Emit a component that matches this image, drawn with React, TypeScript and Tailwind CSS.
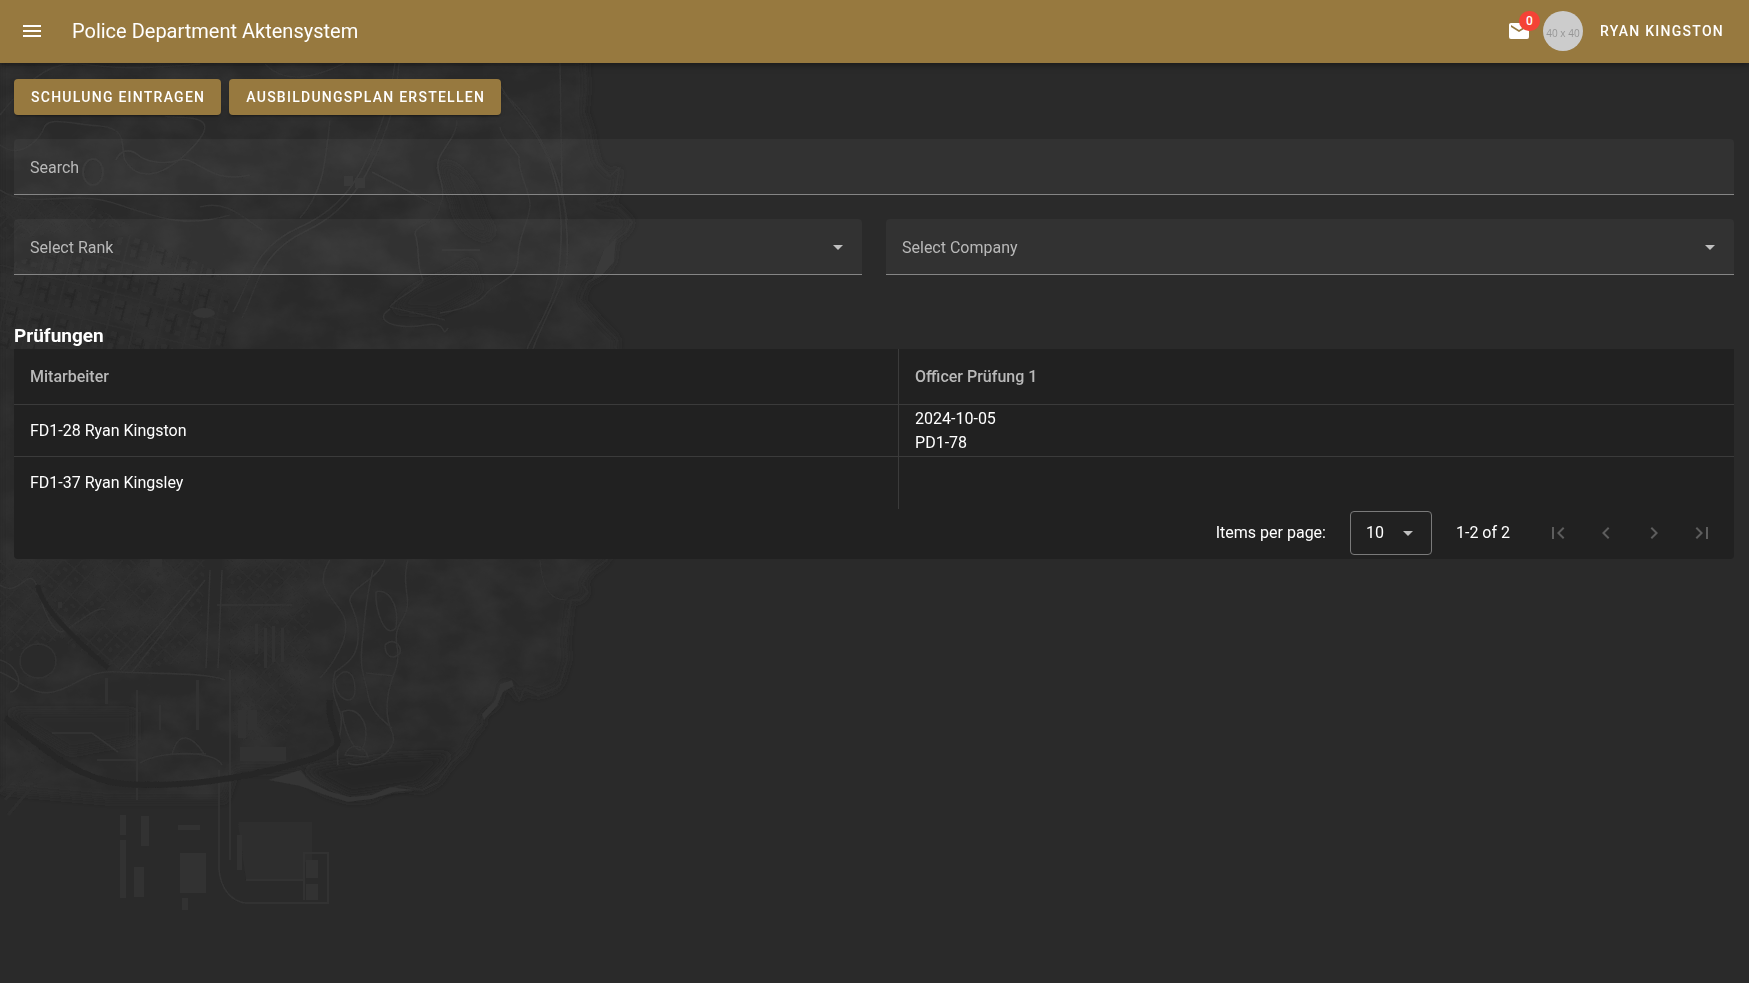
import type { ReactNode } from "react";

const ICONS = {
  menu: "M3 6h18v2H3zm0 5h18v2H3zm0 5h18v2H3z",
  mail: "M20 8l-8 5-8-5V6l8 5 8-5m0-2H4c-1.11 0-2 .89-2 2v12a2 2 0 0 0 2 2h16a2 2 0 0 0 2-2V6a2 2 0 0 0-2-2z",
  down: "M7 10l5 5 5-5z",
  first: "M18.41 16.59L13.82 12l4.59-4.59L17 6l-6 6 6 6zM6 6h2v12H6z",
  prev: "M15.41 16.58L10.83 12l4.58-4.59L14 6l-6 6 6 6z",
  next: "M8.59 16.58L13.17 12 8.59 7.41 10 6l6 6-6 6z",
  last: "M5.59 7.41L10.18 12l-4.59 4.59L7 18l6-6-6-6zM16 6h2v12h-2z",
};

function Icon({ name, className = "" }: { name: keyof typeof ICONS; className?: string }) {
  return (
    <svg viewBox="0 0 24 24" aria-hidden="true" className={`size-6 fill-current ${className}`}>
      <path d={ICONS[name]} />
    </svg>
  );
}

const BUTTON =
  "h-9 cursor-pointer rounded bg-[#97793f] pr-4 pl-[17px] text-sm font-medium uppercase tracking-[0.09em] shadow-[0_3px_1px_-2px_rgba(0,0,0,0.2),0_2px_2px_rgba(0,0,0,0.14),0_1px_5px_rgba(0,0,0,0.12)]";

const FIELD =
  "peer block h-14 w-full appearance-none rounded-t border-b border-[#858585] bg-white/4 px-4 text-base text-white outline-none";

const FIELD_LABEL = "pointer-events-none absolute top-[17px] left-4 leading-6 text-[#b9b9b9]";

function SelectField({ id, label }: { id: string; label: string }) {
  return (
    <div className="relative">
      <select id={id} className={FIELD} defaultValue="">
        <option value="" />
      </select>
      <label htmlFor={id} className={FIELD_LABEL}>{label}</label>
      <Icon name="down" className="pointer-events-none absolute right-3 top-4 text-[#c0c0c0]" />
    </div>
  );
}

const COAST =
  "M585 60L586 90 584 112 590 130 592 143 597 163 610 176 619 168 616 190 613 200 594 204 618 208 632 222 626 232 615 240 612 263 600 276 588 282 580 300 596 318 617 340 612 380 620 460 610 530 607 560 590 572 582 584 588 592 580 600 571 600 569 613 566 640 567 660 560 684 556 688 538 695 524 689 520 700 510 683 503 682 497 705 483 714 482 724 470 738 466 750 451 763 438 782 422 790 400 786 384 790 372 798 350 800 330 794 318 788 306 778 300 770";

const LAND = `M0 60${COAST.replace("M", "L")}L235 770 225 800 110 800 0 790Z`;

const ROADS = [
  "M503 93C530 115 545 145 556 175S568 240 567 262 545 315 533 349",
  "M500 85C520 120 540 130 552 170S562 240 559 270 535 330 527 349",
  "M560 62L562 190 567 220",
  "M500 127C502 140 515 148 519 157 518 175 530 190 530 205S518 235 518 258 495 282 487 293 460 310 440 313",
  "M457 120C457 138 440 150 438 162S448 190 440 205C436 228 416 222 415 234 421 250 415 262 423 280 415 292 398 296 390 307",
  "M395 63C390 100 385 115 375 140S350 205 300 227 250 285 233 312",
  "M399 63C396 100 392 115 382 140S355 208 306 231 258 288 242 318",
  "M330 120C325 160 325 190 300 218",
  "M372 172L435 205M442 250H480",
  "M0 115C20 90 45 60 80 64S130 70 200 64",
  "M0 145C20 160 40 140 44 128S70 124 100 126 120 150 125 160 150 190 190 150 178 120 165 116",
  "M116 160C120 150 130 148 138 155S165 165 180 160 210 185 250 175",
  "M265 64C290 90 330 70 345 63",
  "M0 190C30 210 70 190 110 202S180 230 230 215",
  "M200 207C225 200 240 215 262 230",
  "M390 309C370 322 400 330 425 325S440 340 448 328",
  "M385 560C378 580 348 588 350 602 355 615 359 622 358 640S345 665 335 672C330 690 335 700 340 712S335 745 338 765",
  "M408 560C400 590 415 600 402 620S403 650 396 668 382 710 392 732 360 770 348 763",
  "M373 570C365 600 365 620 362 645S366 680 368 695 382 720 392 728",
  "M376 592C385 588 400 600 396 628 385 640 375 610 376 592Z",
  "M335 680C345 665 355 672 355 690S335 700 335 680Z",
  "M342 712C355 705 370 720 365 742S345 735 342 712Z",
  "M345 755C350 742 365 745 368 757ZM366 673L394 676",
  "M385 645C395 635 405 650 398 655S385 655 385 645Z",
  "M330 560C310 590 340 600 345 620S330 668 320 678",
  "M0 585C20 600 30 560 38 590S55 630 60 632 100 602 105 610",
  "M0 672C20 680 35 700 60 690S90 670 120 672 205 672 225 680",
  "M0 660C20 665 25 690 10 692",
  "M120 670L190 590M132 672L205 580",
  "M210 570L206 668M222 570L218 668M217 605H292",
  "M52 733H92L118 752M97 760H137M137 690V800M160 705V730",
  "M140 763C160 750 215 750 222 765M230 670V860M219 770V870C221 890 232 901 245 903",
  "M172 755C178 730 192 735 204 754M172 754H206",
];

const HIGHWAY = "M5 718C40 745 75 780 125 784S240 780 302 762 325 740 330 700";

const BLOCKS: [number, number, number, number][] = [
  [120, 815, 6, 20], [120, 840, 6, 58], [134, 867, 10, 30], [141, 816, 8, 30],
  [180, 853, 26, 40], [182, 898, 6, 12], [178, 825, 22, 5],
  [306, 860, 12, 18], [306, 884, 12, 16], [237, 835, 5, 35], [238, 710, 8, 28],
  [248, 710, 9, 20], [240, 747, 46, 14], [196, 680, 3, 50], [58, 602, 4, 6], [105, 678, 3, 26],
  [344, 176, 9, 10], [355, 178, 10, 10], [150, 558, 12, 9],
  [255, 624, 3, 30], [264, 628, 3, 40], [272, 626, 3, 36], [281, 628, 3, 34],
];

const BEACH = "M268 780L300 770 310 782 328 791 350 797 372 795 390 787 415 790 395 792 372 799 348 802 322 794 300 786Z";

/** Faint aerial map behind the page content. */
function MapBackdrop() {
  return (
    <svg
      aria-hidden="true"
      viewBox="0 0 1749 983"
      preserveAspectRatio="xMinYMin slice"
      className="pointer-events-none absolute inset-0 -z-10 size-full"
    >
      <defs>
        <filter id="terrain" x="0" y="0" width="100%" height="100%" colorInterpolationFilters="sRGB">
          <feGaussianBlur in="SourceAlpha" stdDeviation="4" result="shape" />
          <feTurbulence type="fractalNoise" baseFrequency="0.022 0.03" numOctaves="6" seed="8" />
          <feColorMatrix values="0 0 0 0 0.27  0 0 0 0 0.27  0 0 0 0 0.27  1.8 0 0 0 -0.6" />
          <feComposite in2="shape" operator="in" />
        </filter>
        <filter id="soft">
          <feGaussianBlur stdDeviation="0.7" />
        </filter>
        <filter id="haze">
          <feGaussianBlur stdDeviation="4" />
        </filter>
        <pattern id="streets" width="26" height="32" patternUnits="userSpaceOnUse" patternTransform="rotate(14)">
          <path d="M0 1H26M1 0V32" stroke="#303030" strokeWidth="2" />
          <path d="M6 6h6v5H6zM16 8h5v9h-5zM6 18h5v8H6zM16 22h6v5h-6z" fill="#303030" />
          <path d="M12 6h2v20h-2zM4 13h8v2H4z" fill="#272727" />
        </pattern>
        <pattern id="harbour" width="22" height="15" patternUnits="userSpaceOnUse" patternTransform="rotate(-48)">
          <path d="M0 1H22M1 0V15" stroke="#303030" strokeWidth="1" />
          <path d="M7 5h4v4H7zM15 7h3v5h-3z" fill="#2f2f2f" />
        </pattern>
      </defs>
      <path d={LAND} fill="#2c2c2c" filter="url(#haze)" />
      <path d={LAND} filter="url(#terrain)" opacity="0.36" />
      <g filter="url(#haze)" fill="#292929">
        <path d="M8 712H135V740L70 752Z" />
        <path d="M440 165C455 160 475 185 480 205S495 225 490 235 455 225 455 205Z" />
        <path d="M395 310C410 280 440 285 470 260L480 290 440 312Z" />
        <path d="M305 770C340 765 370 760 395 757L450 755 420 785 350 795Z" fill="#272727" />
      </g>
      <g filter="url(#soft)">
        <path d="M0 265L130 235 230 275 225 349H0Z" fill="url(#streets)" opacity="0.65" />
        <path d="M0 560H205L200 660 120 672 60 640 0 655Z" fill="url(#harbour)" />
        <path d="M0 195L90 205 130 225 0 240Z" fill="url(#harbour)" />
        <path d="M225 560H310V660L285 740H235Z" fill="url(#harbour)" opacity="0.7" />
        <path d="M238 822H312V862H304V880H246Z" fill="#2e2e2e" />
        <g fill="none" stroke="#343434" strokeWidth="1.6" strokeLinejoin="round">
          <path d={COAST} stroke="#2f2f2f" strokeWidth="2" />
          {ROADS.map((d) => (
            <path key={d} d={d} />
          ))}
          <path d="M540 560C542 585 548 600 566 600M390 307L445 320" stroke="#303030" />
        </g>
        <path d={HIGHWAY} fill="none" stroke="#262626" strokeWidth="6" />
        <path d="M38 585C40 605 70 635 108 668" fill="none" stroke="#272727" strokeWidth="5" />
        <path d={BEACH} fill="#343434" />
        <path d="M500 684L512 680 514 686 503 692 497 706 484 720 482 714 495 700Z" fill="#343434" />
        <path d="M604 250L616 238 614 262 600 276 592 280Z" fill="#323232" />
        <ellipse cx="38" cy="661" rx="18" ry="17" fill="#292929" stroke="#303030" strokeWidth="2" />
        <ellipse cx="93" cy="172" rx="10" ry="13" fill="none" stroke="#343434" strokeWidth="2" />
        <ellipse cx="204" cy="313" rx="11" ry="5" fill="#353535" />
        <g fill="#303030">
          {BLOCKS.map(([x, y, w, h]) => (
            <rect key={`${x}-${y}`} x={x} y={y} width={w} height={h} />
          ))}
        </g>
        <path d="M245 903H328V853H304V900M246 880H304" fill="none" stroke="#303030" strokeWidth="2" />
        <path d="M5 800L36 766M8 815L42 775M18 740L44 762M0 792L12 780" fill="none" stroke="#2f2f2f" strokeWidth="3" />
      </g>
    </svg>
  );
}

const ROWS: { name: string; exam: string[] }[] = [
  { name: "FD1-28 Ryan Kingston", exam: ["2024-10-05", "PD1-78"] },
  { name: "FD1-37 Ryan Kingsley", exam: [] },
];

function PageButton({ label, children }: { label: string; children: ReactNode }) {
  return (
    <button disabled aria-label={label} className="grid size-12 place-items-center text-[#5d5d5d]">
      {children}
    </button>
  );
}

export default function App() {
  return (
    <div className="relative isolate min-h-screen bg-[#2a2a2a] font-['Roboto',sans-serif] text-base text-white">
      <MapBackdrop />

      <header className="flex h-[63px] items-center justify-between bg-[#97793f] px-2 pb-px shadow-[0_2px_4px_-1px_rgba(0,0,0,0.2),0_4px_5px_rgba(0,0,0,0.14),0_1px_10px_rgba(0,0,0,0.12)]">
        <div className="flex items-center gap-4">
          <button aria-label="Menu" className="grid size-12 place-items-center">
            <Icon name="menu" />
          </button>
          <h1 className="text-xl">Police Department Aktensystem</h1>
        </div>
        <div className="flex items-center">
          <button aria-label="Messages" className="relative mr-3">
            <Icon name="mail" />
            <span className="absolute -top-2 left-3 grid h-5 w-[21px] place-items-center rounded-full bg-[#f44336] text-xs font-medium">
              0
            </span>
          </button>
          <span className="grid size-10 place-items-center rounded-full bg-[#cccccc] pt-1 font-['Open_Sans',sans-serif] text-[10px] leading-3 whitespace-nowrap text-[#969696]">
            40 x 40
          </span>
          <button className="h-9 px-[17px] text-sm font-medium uppercase tracking-[0.09em]">Ryan Kingston</button>
        </div>
      </header>

      <main className="pt-4 pr-[15px] pl-[14px]">
        <div className="flex gap-2">
          <button className={BUTTON}>Schulung eintragen</button>
          <button className={BUTTON}>Ausbildungsplan erstellen</button>
        </div>

        <div className="mt-6 grid grid-cols-2 gap-6">
          <div className="relative col-span-2">
            <input id="search" type="text" placeholder=" " className={FIELD} />
            <label htmlFor="search" className={`${FIELD_LABEL} peer-[:not(:placeholder-shown)]:hidden`}>
              Search
            </label>
          </div>
          <SelectField id="rank" label="Select Rank" />
          <SelectField id="company" label="Select Company" />
        </div>

        <h2 className="mt-12 text-[19px] leading-[26px] font-bold">Prüfungen</h2>
        <section className="rounded-b bg-[#212121]">
          <table className="w-full border-separate border-spacing-0 text-left">
            <thead>
              <tr className="text-[#b9b9b9]">
                <th className="h-14 w-[51.4%] border-b border-[#3b3b3b] px-4 font-medium">Mitarbeiter</th>
                <th className="h-14 border-b border-l border-[#3b3b3b] px-4 font-medium">Officer Prüfung 1</th>
              </tr>
            </thead>
            <tbody>
              {ROWS.map((row) => (
                <tr key={row.name} className="group">
                  <td className="h-[52px] border-b border-[#3b3b3b] px-4 py-0 group-last:border-b-0">{row.name}</td>
                  <td className="h-[52px] border-b border-l border-[#3b3b3b] px-4 py-0 group-last:border-b-0">
                    {row.exam.map((line) => (
                      <div key={line}>{line}</div>
                    ))}
                  </td>
                </tr>
              ))}
            </tbody>
          </table>

          <div className="flex h-[50px] items-center justify-end px-2 pb-0.5">
            <label htmlFor="page-size">Items per page:</label>
            <div className="relative mx-6">
              <select
                id="page-size"
                className="block h-11 w-[82px] appearance-none rounded border border-[#7a7a7a] bg-transparent pl-[15px] outline-none"
              >
                <option>10</option>
              </select>
              <Icon name="down" className="pointer-events-none absolute top-2.5 right-3 text-[#c0c0c0]" />
            </div>
            <span className="mr-6">1-2 of 2</span>
            <nav aria-label="Pagination" className="flex">
              <PageButton label="First page"><Icon name="first" /></PageButton>
              <PageButton label="Previous page"><Icon name="prev" /></PageButton>
              <PageButton label="Next page"><Icon name="next" /></PageButton>
              <PageButton label="Last page"><Icon name="last" /></PageButton>
            </nav>
          </div>
        </section>
      </main>
    </div>
  );
}
